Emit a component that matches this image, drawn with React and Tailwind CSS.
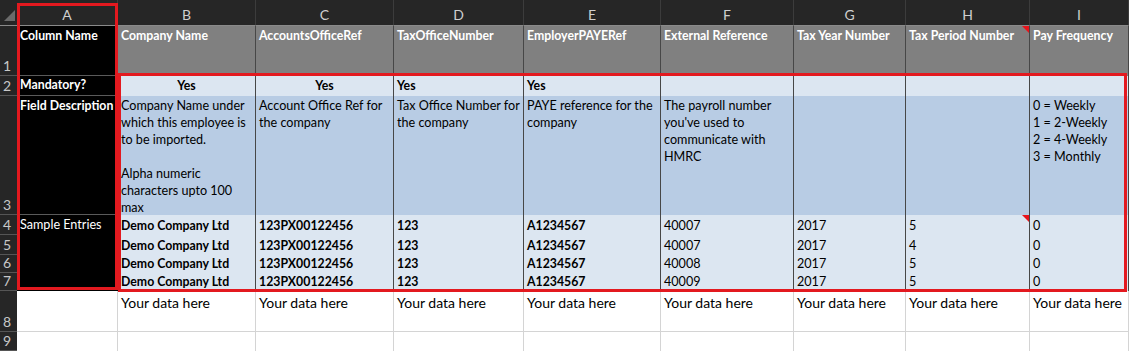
import React from 'react';

const cols = ['A', 'B', 'C', 'D', 'E', 'F', 'G', 'H', 'I'];

const heads = ['Company Name', 'AccountsOfficeRef', 'TaxOfficeNumber', 'EmployerPAYERef', 'External Reference', 'Tax Year Number', 'Tax Period Number', 'Pay Frequency'];

const mandatory = [
  { t: 'Yes', c: true }, { t: 'Yes', c: true }, { t: 'Yes' }, { t: 'Yes' }, { t: '' }, { t: '' }, { t: '' }, { t: '' },
];

const descriptions = [
  ['Company Name under', 'which this employee is', 'to be imported.', '\u00a0', 'Alpha numeric', 'characters upto 100', 'max'],
  ['Account Office Ref for', 'the company'],
  ['Tax Office Number for', 'the company'],
  ['PAYE reference for the', 'company'],
  ['The payroll number', "you've used to", 'communicate with', 'HMRC'],
  [],
  [],
  ['0 = Weekly', '1 = 2-Weekly', '2 = 4-Weekly', '3 = Monthly'],
];

const samples = [
  ['Demo Company Ltd', '123PX00122456', '123', 'A1234567', '40007', '2017', '5', '0'],
  ['Demo Company Ltd', '123PX00122456', '123', 'A1234567', '40007', '2017', '4', '0'],
  ['Demo Company Ltd', '123PX00122456', '123', 'A1234567', '40008', '2017', '5', '0'],
  ['Demo Company Ltd', '123PX00122456', '123', 'A1234567', '40009', '2017', '5', '0'],
];

// bold cols in sample rows: B..E
const boldSample = [true, true, true, true, false, false, false, false];

const Flag = () => (
  <span className="absolute right-0 top-0 w-0 h-0 border-l-[7px] border-l-transparent border-t-[7px] border-t-[#e8141c]" />
);

const RowNum = ({ n }) => (
  <div className="bg-[#262626] border-b border-[#555555] flex items-end pl-[3px] text-[14px] leading-[18px] text-[#c8c8c8]">
    {n}
  </div>
);

const App = () => {
  return (
    <div className="relative w-[1129px] h-[351px] overflow-hidden bg-white font-['Lato','Noto_Sans',sans-serif]">
      <div className="grid grid-cols-[17px_101px_138px_138px_130px_137px_133px_112px_124px_99px] grid-rows-[26px_50px_20px_119px_20px_20px_18px_18px_41px_19px]">
        {/* column headers */}
        <div className="relative bg-[#262626] border-b border-[#8a8a8a]">
          <span className="absolute left-[4px] top-[10px] w-0 h-0 border-l-[11px] border-l-transparent border-b-[11px] border-b-[#6a6a6a]" />
        </div>
        {cols.map((c) => (
          <div key={c} className="bg-[#262626] border-b border-[#8a8a8a] border-r border-r-[#3c3c3c] flex items-center justify-center pt-[3px] text-[14px] text-[#cfcfcf]">
            {c}
          </div>
        ))}

        {/* row 1 */}
        <RowNum n={1} />
        <div className="bg-black border-b border-[#5a5a5a] pl-[3px] pt-[1px] text-[12.3px] leading-[17px] font-bold text-white">Column Name</div>
        {heads.map((h, i) => (
          <div key={h} className="relative bg-[#808080] border-r border-[#474747] pl-[3px] pt-[1px] text-[12.3px] leading-[17px] font-bold text-white whitespace-nowrap overflow-hidden">
            {h}
            {i === 6 && <Flag />}
          </div>
        ))}

        {/* row 2 */}
        <RowNum n={2} />
        <div className="bg-black border-b border-[#5a5a5a] pl-[3px] flex items-center text-[12.3px] font-bold text-white">Mandatory?</div>
        {mandatory.map((m, i) => (
          <div key={i} className={`bg-[#dce6f1] border-r border-[#474747] px-[3px] flex items-center text-[12.3px] font-bold text-black ${m.c ? 'justify-center' : ''}`}>
            {m.t}
          </div>
        ))}

        {/* row 3 */}
        <RowNum n={3} />
        <div className="bg-black border-b border-[#5a5a5a] pl-[3px] pt-[1px] text-[12.3px] leading-[17px] font-bold text-white whitespace-nowrap">Field Description</div>
        {descriptions.map((lines, i) => (
          <div key={i} className="bg-[#b8cce4] border-r border-[#474747] pl-[3px] pt-[1px] text-[12.6px] leading-[17px] text-black whitespace-nowrap overflow-hidden">
            {lines.map((l, j) => (
              <div key={j}>{l}</div>
            ))}
          </div>
        ))}

        {/* rows 4-7 */}
        {samples.map((row, r) => (
          <React.Fragment key={r}>
            <RowNum n={r + 4} />
            {r === 0 && (
              <div className="row-span-4 bg-black pl-[3px] pt-[1px] text-[12.6px] leading-[17px] text-white">Sample Entries</div>
            )}
            {row.map((v, i) => (
              <div key={i} className={`relative bg-[#dce6f1] border-r border-[#474747] pl-[3px] pb-[1px] flex items-end leading-[17px] text-black whitespace-nowrap ${boldSample[i] ? 'font-bold text-[12.3px]' : 'text-[12.6px]'}`}>
                {v}
                {r === 0 && i === 6 && <Flag />}
              </div>
            ))}
          </React.Fragment>
        ))}

        {/* row 8 */}
        <RowNum n={8} />
        <div className="bg-white border-r border-b border-[#d4d4d4]" />
        {heads.map((h) => (
          <div key={h} className="bg-white border-r border-b border-[#d4d4d4] pl-[3px] pt-[2px] text-[14px] leading-[20px] text-black whitespace-nowrap">
            Your data here
          </div>
        ))}

        {/* row 9 */}
        <RowNum n={9} />
        <div className="bg-white border-r border-[#d4d4d4]" />
        {heads.map((h) => (
          <div key={h} className="bg-white border-r border-[#d4d4d4]" />
        ))}
      </div>

      {/* selection outlines */}
      <div className="absolute left-[17px] top-[3px] w-[101px] h-[287px] border-[3px] border-[#e3191f] pointer-events-none" />
      <div className="absolute left-[118px] top-[73px] w-[1009px] h-[219px] border-[3px] border-[#e3191f] pointer-events-none" />
    </div>
  );
};

export default App;
